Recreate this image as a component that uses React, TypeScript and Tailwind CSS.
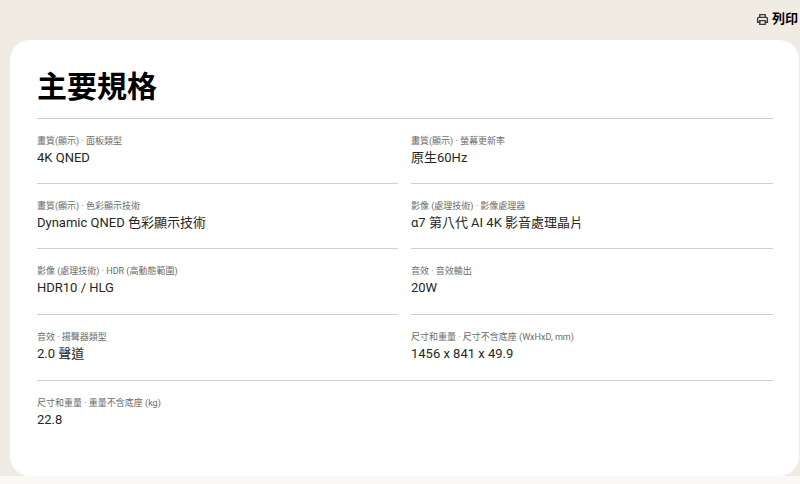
const rows = [
  [
    ["畫質(顯示) · 面板類型", "4K QNED"],
    ["畫質(顯示) · 螢幕更新率", "原生60Hz"],
  ],
  [
    ["畫質(顯示) · 色彩顯示技術", "Dynamic QNED 色彩顯示技術"],
    ["影像 (處理技術) · 影像處理器", "α7 第八代 AI 4K 影音處理晶片"],
  ],
  [
    ["影像 (處理技術) · HDR (高動態範圍)", "HDR10 / HLG"],
    ["音效 · 音效輸出", "20W"],
  ],
  [
    ["音效 · 揚聲器類型", "2.0 聲道"],
    ["尺寸和重量 · 尺寸不含底座 (WxHxD, mm)", "1456 x 841 x 49.9"],
  ],
];

function Spec({ label, value, className }: { label: string; value: string; className: string }) {
  return (
    <div className={`pt-[16px] ${className}`}>
      <div className="text-[9px] leading-[13px] text-[#6b6b6b]">{label}</div>
      <div className="text-[13px] leading-[20px] text-[#262626]">{value}</div>
    </div>
  );
}

export default function App() {
  return (
    <div className="w-[800px] h-[484px] overflow-hidden bg-[#fbf9f6] font-['Roboto','Noto_Sans_CJK_TC',sans-serif]">
      <div className="h-[476px] bg-[#f0ece4] flex flex-col">
        <div className="h-10 flex items-start justify-end pt-[11px] shrink-0">
          <div className="flex items-center gap-[3px] w-[44px] shrink-0 overflow-hidden">
            <svg width="13" height="13" viewBox="0 0 24 24" fill="none" stroke="#3a3a3a" strokeWidth="2.6" className="shrink-0">
              <path d="M7 8V3h10v5" />
              <path d="M7 17H3v-7a2 2 0 0 1 2-2h14a2 2 0 0 1 2 2v7h-4" />
              <path d="M7 14h10v7H7z" />
            </svg>
            <span className="text-[13px] leading-4 font-bold text-black whitespace-nowrap">列印</span>
          </div>
        </div>
        <div className="ml-[10px] mr-[1px] flex-1 bg-white rounded-[20px] pl-[27px] pr-[26px] pt-[25px]">
          <h2 className="text-[30px] leading-[44px] font-bold text-black h-[53px]">主要規格</h2>
          <div className="border-t border-[#cfcfcf] -mt-[0.5px]">
            {rows.map((row, r) => (
              <div key={r} className={`grid grid-cols-[361px_362px] gap-x-[13px] ${r === 3 ? "border-b border-[#cfcfcf]" : ""}`}>
                {row.map(([label, value]) => (
                  <Spec
                    key={label}
                    label={label}
                    value={value}
                    className={r < 3 ? "h-[65.4px] border-b border-[#cfcfcf]" : "h-[65px]"}
                  />
                ))}
              </div>
            ))}
            <Spec label="尺寸和重量 · 重量不含底座 (kg)" value="22.8" className="h-[65px]" />
          </div>
        </div>
      </div>
    </div>
  );
}
